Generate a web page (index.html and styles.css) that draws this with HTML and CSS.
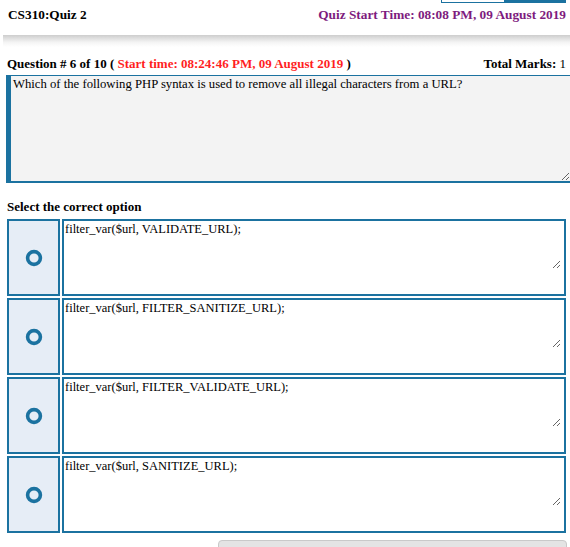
FILE: index.html
```html
<!DOCTYPE html>
<html lang="en">
<head>
    <meta charset="UTF-8">
    <meta name="viewport" content="width=device-width, initial-scale=1.0">
    <title>CS310 Quiz 2</title>
    <link rel="stylesheet" href="styles.css">
</head>
<body>

<!-- tabs scrolled above -->
<div class="topbar">
    <span class="tab-outline"></span>
    <span class="tab-fill"></span>
</div>

<div class="header">
    <span class="course">CS310:Quiz 2</span>
    <span class="quiz-time">Quiz Start Time: 08:08 PM, 09 August 2019</span>
</div>

<div class="shadow-bar"></div>

<div class="question-head">
    <span>Question # 6 of 10 ( <span class="start-time">Start time: 08:24:46 PM, 09 August 2019</span> )</span>
    <span>Total Marks: <span class="marks">1</span></span>
</div>

<textarea class="question-text" readonly>Which of the following PHP syntax is used to remove all illegal characters from a URL?</textarea>

<div class="select-label">Select the correct option</div>

<div class="options">
    <div class="option">
        <div class="option-radio">
            <svg width="18" height="18" viewBox="0 0 18 18"><circle cx="9" cy="9" r="6.4" fill="none" stroke="#1b72a0" stroke-width="3.6"/></svg>
        </div>
        <div class="option-text"><textarea readonly>filter_var($url, VALIDATE_URL);</textarea></div>
    </div>
    <div class="option">
        <div class="option-radio">
            <svg width="18" height="18" viewBox="0 0 18 18"><circle cx="9" cy="9" r="6.4" fill="none" stroke="#1b72a0" stroke-width="3.6"/></svg>
        </div>
        <div class="option-text"><textarea readonly>filter_var($url, FILTER_SANITIZE_URL);</textarea></div>
    </div>
    <div class="option">
        <div class="option-radio">
            <svg width="18" height="18" viewBox="0 0 18 18"><circle cx="9" cy="9" r="6.4" fill="none" stroke="#1b72a0" stroke-width="3.6"/></svg>
        </div>
        <div class="option-text"><textarea readonly>filter_var($url, FILTER_VALIDATE_URL);</textarea></div>
    </div>
    <div class="option">
        <div class="option-radio">
            <svg width="18" height="18" viewBox="0 0 18 18"><circle cx="9" cy="9" r="6.4" fill="none" stroke="#1b72a0" stroke-width="3.6"/></svg>
        </div>
        <div class="option-text"><textarea readonly>filter_var($url, SANITIZE_URL);</textarea></div>
    </div>
</div>

<div class="bottom-button"></div>

</body>
</html>
```

FILE: styles.css
```css
body {
    font-family: 'Liberation Serif', 'Times New Roman', serif;
    font-size: 13px;
    line-height: 15px;
    color: #000;
    background-color: #fff;
    margin: 0;
    padding: 0;
    overflow: hidden;
}

.topbar {
    display: flex;
    justify-content: flex-end;
    height: 3px;
    padding-right: 4px;
}

.tab-outline {
    width: 62px;
    height: 2px;
    border: 1px solid #1b72a0;
    border-top: none;
}

.tab-fill {
    width: 61px;
    height: 3px;
    background-color: #1b72a0;
}

.header {
    display: flex;
    justify-content: space-between;
    padding: 4px 4px 0 8px;
    font-size: 13.3px;
    font-weight: bold;
}

.quiz-time {
    color: #7e1b7e;
}

.shadow-bar {
    height: 12px;
    margin: 13px 0 0 3px;
    background: linear-gradient(to bottom, #cdcdcd, #f4f4f4 60%, #fff);
}

.question-head {
    display: flex;
    justify-content: space-between;
    margin-top: 9px;
    padding: 0 4px 0 7px;
    font-weight: bold;
}

.start-time {
    color: #ff1f1f;
}

.marks {
    font-weight: normal;
}

.question-text {
    display: block;
    box-sizing: border-box;
    width: 564px;
    height: 108px;
    margin: 4px 0 0 6px;
    padding: 1px 2px;
    border: none;
    border-left: 5px solid #1b72a0;
    border-top: 1px solid #1b72a0;
    border-bottom: 2px solid #1b72a0;
    background-color: #f3f3f3;
    font-family: inherit;
    font-size: 12.7px;
    line-height: 15px;
    color: #000;
    outline: none;
}

.select-label {
    margin-top: 16px;
    padding-left: 7px;
    font-weight: bold;
}

.options {
    display: flex;
    flex-direction: column;
    gap: 2px;
    margin-top: 5px;
    padding: 0 4px 0 7px;
}

.option {
    display: flex;
    gap: 2px;
    height: 77px;
}

.option-radio {
    display: flex;
    align-items: center;
    justify-content: center;
    box-sizing: border-box;
    width: 53px;
    border: 2px solid #1b72a0;
    background-color: #e6edf6;
}

.option-text {
    flex: 1;
    box-sizing: border-box;
    border: 2px solid #1b72a0;
    padding: 0 3px 0 0;
}

.option-text textarea {
    display: block;
    box-sizing: border-box;
    width: 100%;
    height: 48px;
    padding: 1px 1px;
    border: none;
    background-color: #fff;
    font-family: inherit;
    font-size: 12.5px;
    line-height: 15px;
    color: #000;
    outline: none;
}

.bottom-button {
    box-sizing: border-box;
    width: 349px;
    height: 24px;
    margin: 7px 0 0 218px;
    border: 1px solid #c9c9c9;
    border-radius: 4px;
    background-color: #e4e4e4;
}
```
